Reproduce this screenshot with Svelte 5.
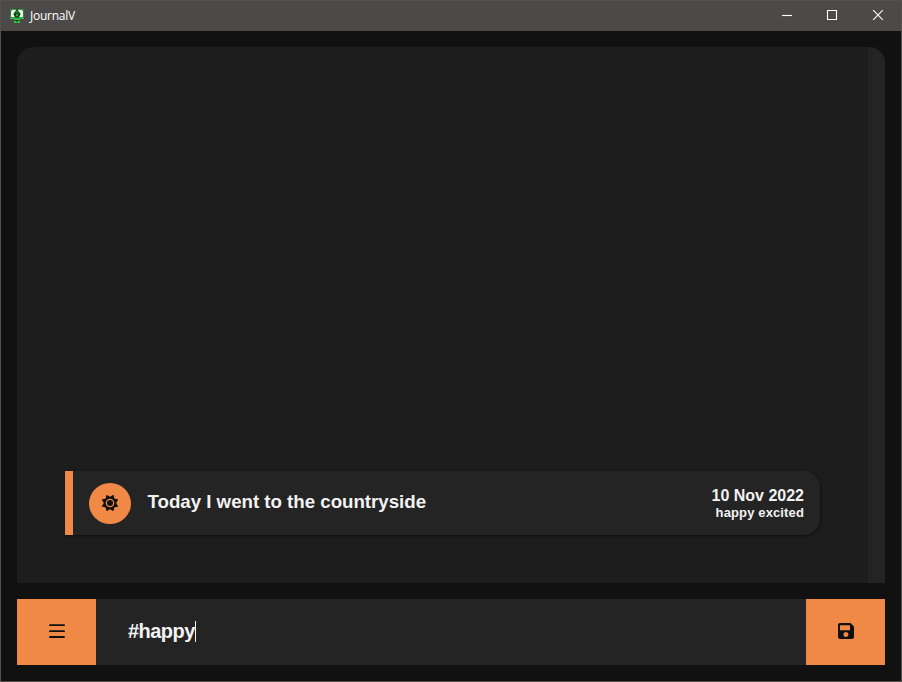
<script>
  let entry = $state('#happy');
  const entries = [
    { title: 'Today I went to the countryside', date: '10 Nov 2022', tags: ['happy', 'excited'] }
  ];
  const spikes = Array.from({ length: 8 }, (_, i) => i * 45 + 22.5);
</script>

<div class="window">
  <header>
    <svg class="logo" width="16" height="16" viewBox="0 0 16 16">
      <path fill="#35a83d" d="M1.5 1h13v10h-13z" />
      <path fill="#e4f4e6" d="M3 2h10v1h1v6H2V3h1z" />
      <path fill="#17451b" d="M8 0L6.6 3 4.4 6l1.6 3.5h4L11.6 6 9.400 3z" />
      <path fill="#2fae38" d="M7.500 2.500h1V5h-1zM7 6h2v2H7z" />
      <path fill="#35c43f" d="M1 10h4.500v1H1zM10.500 10H15v1h-4.500zM5 11h6v1H5zM5 13h6v2H5z" />
      <path fill="#174c1b" d="M6 12h4v1H6zM7 13.500h2v.8H7z" />
    </svg>
    <span class="name">JournalV</span>
    <div class="controls">
      <svg width="45" height="30" viewBox="0 0 45 30"><path d="M17 15.5h10" /></svg>
      <svg width="46" height="30" viewBox="0 0 46 30"><path d="M17.5 10.5h9v9h-9z" /></svg>
      <svg width="46" height="30" viewBox="0 0 46 30"><path d="M17.2 10.2l9.6 9.6M26.8 10.2l-9.6 9.6" /></svg>
    </div>
  </header>

  <main>
    <section class="journal">
      <div class="list">
        {#each entries as item}
          <article>
            <div class="mood">
              <svg width="18" height="18" viewBox="-9 -9 18 18">
                {#each spikes as angle}
                  <path d="M-2.7 -5L-.4 -8.6H.4L2.7 -5z" transform="rotate({angle})" />
                {/each}
                <circle r="5.300" fill="none" stroke="#111" stroke-width="2" />
                <circle r="3" />
              </svg>
            </div>
            <h3>{item.title}</h3>
            <div class="meta">
              <span class="date">{item.date}</span>
              <span class="tags">{item.tags.join(' ')}</span>
            </div>
          </article>
        {/each}
      </div>
      <div class="track"></div>
    </section>

    <footer>
      <button class="menu" aria-label="Menu">
        <svg width="16" height="14" viewBox="0 0 16 14">
          <path d="M1 .2h14a.95.95 0 010 1.900H1a.95.95 0 010-1.900zM1 6.200h14a.95.95 0 010 1.900H1a.95.95 0 010-1.900zM1 12.050h14a.95.95 0 010 1.900H1a.95.95 0 010-1.900z" />
        </svg>
      </button>
      <div class="field"><span>{entry}</span><i class="caret"></i></div>
      <button aria-label="Save">
        <svg width="16" height="16" viewBox="0 0 16 16">
          <path fill-rule="evenodd" d="M2 0h10.5L16 3.5V14a2 2 0 01-2 2H2a2 2 0 01-2-2V2a2 2 0 012-2zM2 2.2v5h10v-5zM8 9a2.5 2.5 0 100 5 2.5 2.5 0 000-5z" />
        </svg>
      </button>
    </footer>
  </main>
</div>

<style>
  :global(body) {
    margin: 0;
    overflow: hidden;
  }
  .window {
    box-sizing: border-box;
    width: 902px;
    height: 682px;
    display: flex;
    flex-direction: column;
    background: #111;
    border: 1px solid #535251;
    font-family: 'Liberation Sans', Arial, sans-serif;
    color: #f2f2f2;
  }
  header {
    height: 30px;
    flex: none;
    display: flex;
    align-items: center;
    background: #4c4a48;
  }
  .logo {
    margin-left: 8px;
  }
  .name {
    margin-left: 5px;
    font: 12px/16px 'Open Sans', 'Noto Sans', sans-serif;
    letter-spacing: -0.25px;
    color: #fff;
  }
  .controls {
    display: flex;
    margin-left: auto;
    margin-top: -2px;
    margin-right: -1px;
  }
  .controls path {
    fill: none;
    stroke: #fff;
    stroke-width: 1.1;
  }
  main {
    flex: 1;
    display: flex;
    flex-direction: column;
    gap: 16px;
    padding: 16px;
  }
  .journal {
    flex: 1;
    display: flex;
    overflow: hidden;
    background: #1d1d1d;
    border-radius: 16px 16px 0 0;
  }
  .list {
    flex: 1;
    display: flex;
    flex-direction: column;
    justify-content: flex-end;
    padding: 48px;
  }
  .track {
    width: 17px;
    background: #242424;
  }
  article {
    box-sizing: border-box;
    height: 64px;
    display: flex;
    align-items: center;
    padding: 0 16px;
    background: #242424;
    border-left: 8px solid #ef8945;
    border-radius: 0 16px 16px 0;
    box-shadow: 1px 1px 3px rgba(0, 0, 0, 0.5);
  }
  .mood {
    width: 42px;
    height: 41px;
    display: flex;
    align-items: center;
    justify-content: center;
    background: #ef8945;
    border-radius: 50%;
  }
  svg {
    display: block;
  }
  h3 {
    margin: 0 0 2px 16.5px;
    font-size: 18.72px;
    line-height: 22px;
    letter-spacing: -0.02px;
  }
  .meta {
    margin-left: auto;
    display: flex;
    flex-direction: column;
    align-items: flex-end;
    font-weight: bold;
  }
  .date {
    font-size: 16px;
    line-height: 18px;
  }
  .tags {
    font-size: 13px;
    line-height: 15px;
    letter-spacing: 0.13px;
  }
  footer {
    height: 66px;
    flex: none;
    display: flex;
  }
  button {
    box-sizing: border-box;
    width: 79px;
    padding: 0 0 2px;
    border: 0;
    display: flex;
    align-items: center;
    justify-content: center;
    background: #ef8945;
  }
  .menu {
    padding-left: 1px;
  }
  button path,
  .mood path,
  .mood circle:last-child {
    fill: #111;
  }
  .field {
    flex: 1;
    display: flex;
    align-items: center;
    padding: 0 32px 1px;
    background: #242424;
    font-size: 20px;
    font-weight: bold;
    letter-spacing: -0.55px;
  }
  .caret {
    width: 1px;
    height: 21px;
    background: #f2f2f2;
  }
</style>
